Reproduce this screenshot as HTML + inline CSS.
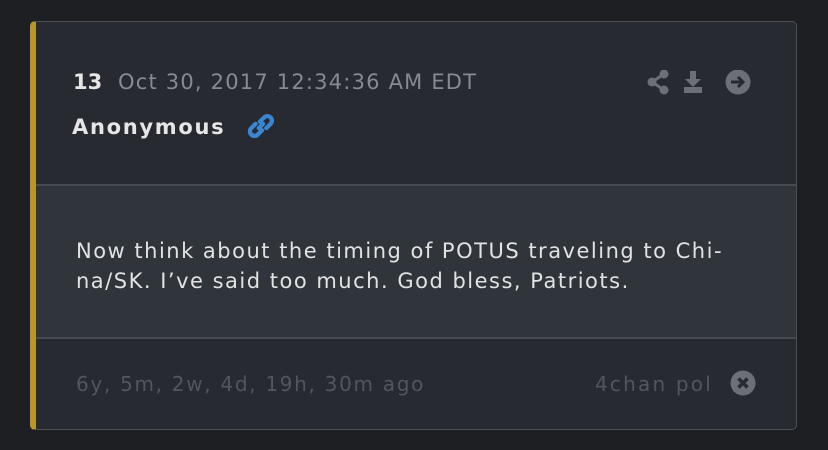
<!DOCTYPE html><html><head><style>
body{margin:0;width:828px;height:450px;background:#1d1f23;font-family:"DejaVu Sans",sans-serif;position:relative;overflow:hidden}
.card{position:absolute;left:30px;top:21px;width:767px;height:409px;background:#272a31;border:1px solid #4b4f56;border-left:6px solid #b8962e;border-radius:5px;box-sizing:border-box}
.t{position:absolute;white-space:nowrap}
.body{position:absolute;left:0;right:0;top:162px;height:151px;background:#30353c;border-top:2px solid #464a51;border-bottom:2px solid #464a51}
</style></head><body>
<div class="card">
<div class="t" style="left:37px;top:48px;font-size:21px;font-weight:bold;color:#e6e6e6">13</div>
<div class="t" style="left:82px;top:48px;font-size:21px;letter-spacing:1.2px;color:#878a90">Oct 30, 2017 12:34:36 AM EDT</div>
<div class="t" style="left:36px;top:93px;font-size:21px;letter-spacing:1.7px;font-weight:bold;color:#e6e6e6">Anonymous</div>
<svg class="t" style="left:211px;top:90px" width="30" height="28" viewBox="0 0 28 26"><g fill="none" stroke="#3a86d0" stroke-width="4" stroke-linecap="round"><path d="M12 9 L16 5 a4 4 0 0 1 6 6 L18 15"/><path d="M14 17 L10 21 a4 4 0 0 1 -6 -6 L8 11"/><path d="M11 15 L15 11"/></g></svg>
<svg class="t" style="left:608px;top:48px" width="120" height="30" viewBox="0 0 120 30"><g fill="#6b6f78"><circle cx="20" cy="4" r="4.5"/><circle cx="8" cy="12" r="4.5"/><circle cx="20" cy="20" r="4.5"/><path d="M8 12 L20 4 M8 12 L20 20" stroke="#6b6f78" stroke-width="3"/><path d="M46 1h6v8h5l-8 8-8-8h5z"/><rect x="40" y="17" width="18" height="6"/><circle cx="94" cy="12" r="12.5"/></g><path d="M87 12h12M94 7l5 5-5 5" stroke="#272a31" stroke-width="3" fill="none"/></svg>
<div class="body">
<div class="t" style="left:40px;top:50px;font-size:21px;letter-spacing:1.5px;line-height:30px;color:#e2e2e2">Now think about the timing of POTUS traveling to Chi-<br>na/SK. I’ve said too much. God bless, Patriots.</div>
</div>
<div class="t" style="left:40px;top:350px;font-size:20px;letter-spacing:1.7px;color:#53565d">6y, 5m, 2w, 4d, 19h, 30m ago</div>
<div class="t" style="left:559px;top:350px;font-size:20px;letter-spacing:2.2px;color:#53565d">4chan pol</div>
<svg class="t" style="left:694px;top:348px" width="26" height="26" viewBox="0 0 26 26"><circle cx="13" cy="13" r="12.5" fill="#6b6f78"/><path d="M8.5 8.5l9 9M17.5 8.5l-9 9" stroke="#272a31" stroke-width="3.5"/></svg>
</div>
</body></html>
